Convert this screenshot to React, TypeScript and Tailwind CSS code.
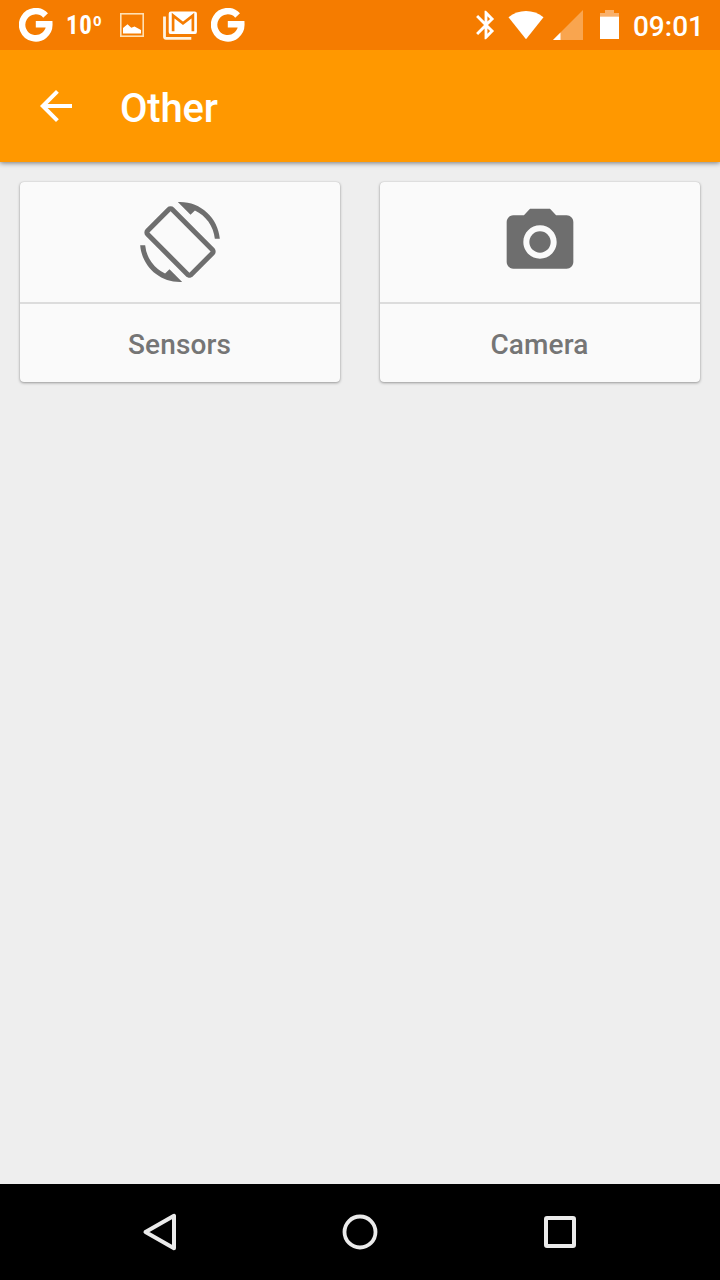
import type { ReactNode } from "react";
import { MdArrowBack, MdBluetooth, MdPhotoCamera, MdScreenRotation } from "react-icons/md";

function GoogleIcon() {
  return (
    <svg className="h-[34px] w-[34px] shrink-0" viewBox="0 0 34 34" fill="none" stroke="#fff" strokeWidth="6.5">
      <path d="M26.6 7.4A13.600 13.600 0 1 0 30.3 16.3H16.8" />
    </svg>
  );
}

function PictureIcon() {
  return (
    <svg className="h-6 w-6 shrink-0" viewBox="0 0 24 24">
      <rect x="0.8" y="0.8" width="22.4" height="22.4" fill="none" stroke="#ffe0b2" strokeWidth="1.6" />
      <path d="M3 20.5V15L7.500 11.200l3.800 3.600 3.200-1.300L21 17v3.500z" fill="#fff" />
    </svg>
  );
}

function MailStackIcon() {
  return (
    <svg className="h-[29px] w-[34px] shrink-0" viewBox="0 0 34 29" fill="none">
      <path d="M1.500 5.500V26a1.400 1.400 0 0 0 1.400 1.400H28.300" strokeWidth="2.800" stroke="#fff3e0" />
      <rect x="5.700" y="0.500" width="28.200" height="22.600" rx="2.200" fill="#fff" />
      <path d="M10.100 20.200V4.600L20 12.300 29.900 4.600V20.200" stroke="#f57c00" strokeWidth="2.700" />
    </svg>
  );
}

function Card({ label, children }: { label: string; children: ReactNode }) {
  return (
    <button className="flex h-[200px] w-[320px] flex-col rounded-[4px] bg-[#fafafa] text-[#6e6e6e] shadow-[0_1px_3px_rgba(0,0,0,0.36),0_0_1px_rgba(0,0,0,0.2)]">
      <span className="flex h-[122px] w-full items-center justify-center border-b-2 border-[#dcdcdc]">{children}</span>
      <span className="flex h-[78px] w-full items-center justify-center pt-[3px] pr-px text-[28px] font-medium tracking-[0.15px] text-[#757575]">
        {label}
      </span>
    </button>
  );
}

export default function App() {
  return (
    <div className="flex h-[1280px] w-[720px] flex-col overflow-hidden bg-[#eeeeee] font-['Roboto',sans-serif]">
      <div className="relative z-10 flex h-[50px] shrink-0 items-center bg-[#f57c00] pl-[19px] pr-4 text-white">
        <GoogleIcon />
        <span className="ml-[13px] w-[54px] pt-px font-['Roboto_Condensed','Roboto',sans-serif] text-[25px] font-bold leading-none tracking-[0.5px]">
          10º
        </span>
        <PictureIcon />
        <span className="ml-[19px] flex">
          <MailStackIcon />
        </span>
        <span className="ml-[14px] flex">
          <GoogleIcon />
        </span>
        <span className="ml-auto flex items-center">
          <MdBluetooth className="h-[34px] w-[34px]" />
          <svg className="ml-[5px] h-[30px] w-[36px]" viewBox="0 0 36 30">
            <path d="M.5 7.300C10.500-1 25.500-1 35.500 7.300L18 29.200z" fill="#fff" />
          </svg>
          <svg className="ml-[9px] h-[30px] w-[30px]" viewBox="0 0 30 30">
            <path d="M0 30L30 0v30z" fill="#f9a54f" />
            <path d="M0 30L7.500 22.500V30z" fill="#fff" />
          </svg>
          <svg className="ml-[17px] h-[30px] w-[19px]" viewBox="0 0 19 30">
            <path d="M0 6.500V3H5V0h9v3h5v3.500z" fill="#f9b06a" />
            <path d="M0 6.500h19V29H0z" fill="#fff" />
          </svg>
          <span className="ml-[14px] pt-[3px] text-[28px] font-medium leading-none">09:01</span>
        </span>
      </div>
      <header className="relative flex h-28 shrink-0 items-center bg-[#ff9800] pl-8 text-white shadow-[0_1px_5px_rgba(0,0,0,0.5)]">
        <MdArrowBack className="h-12 w-12" />
        <h1 className="ml-10 pt-[6px] text-[40px] font-medium leading-none tracking-[-0.2px]">Other</h1>
      </header>
      <main className="flex grow items-start gap-10 px-5 pt-5">
        <Card label="Sensors">
          <MdScreenRotation className="h-20 w-20" />
        </Card>
        <Card label="Camera">
          <MdPhotoCamera className="h-20 w-20" />
        </Card>
      </main>
      <nav className="flex h-24 shrink-0 items-center bg-black">
        <svg className="ml-[140px] h-10 w-10" viewBox="0 0 40 40" fill="none" stroke="#ebebeb" strokeWidth="4" strokeLinejoin="round">
          <path d="M5.500 20L34 3.800V36.200z" />
        </svg>
        <svg className="ml-40 h-10 w-10" viewBox="0 0 40 40" fill="none" stroke="#ebebeb" strokeWidth="3.800">
          <circle cx="20" cy="20" r="15.500" />
        </svg>
        <svg className="ml-40 h-10 w-10" viewBox="0 0 40 40" fill="none" stroke="#ebebeb" strokeWidth="4">
          <rect x="6" y="6" width="28" height="28" rx="1" />
        </svg>
      </nav>
    </div>
  );
}
